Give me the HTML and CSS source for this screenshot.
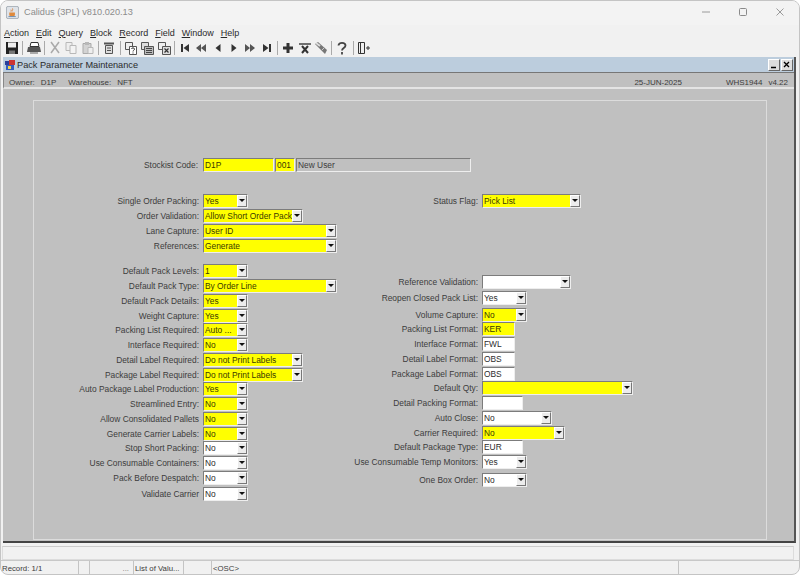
FILE: index.html
```html
<!DOCTYPE html>
<html lang="en">
<head>
    <meta charset="UTF-8">
    <title>Calidus (3PL) v810.020.13</title>
    <link rel="stylesheet" href="styles.css">
</head>
<body>
    <div class="app">
        <header class="titlebar">
            <svg class="app-icon" width="13" height="13" viewBox="0 0 16 16">
                <rect x="0.5" y="0.5" width="15" height="15" rx="2" fill="#dfe3e8" stroke="#9aa3ad"/>
                <path d="M8 3c1 1.500-1 2 0 3.500M6 4.500c0 1 1 1.500 0 2.500" fill="none" stroke="#d9762b"/>
                <path d="M4 8h7v3c0 1-1 1.500-3.500 1.500S4 12 4 11z" fill="#e08a3c"/>
                <path d="M3 13h9" stroke="#5a7fa8"/>
            </svg>
            <span class="app-name">Calidus (3PL) v810.020.13</span>
            <div class="win-btns">
                <svg width="8" height="8" viewBox="0 0 8 8"><path d="M0 4h8" stroke="#9a9a9a"/></svg>
                <svg width="8" height="8" viewBox="0 0 8 8"><rect x="0.500" y="0.500" width="7" height="7" rx="1" fill="none" stroke="#8a8a8a"/></svg>
                <svg width="8" height="8" viewBox="0 0 8 8"><path d="M0.500 0.500l7 7M7.500 0.500l-7 7" stroke="#9a9a9a"/></svg>
            </div>
        </header>

        <nav class="menubar">
            <span><u>A</u>ction</span>
            <span><u>E</u>dit</span>
            <span><u>Q</u>uery</span>
            <span><u>B</u>lock</span>
            <span><u>R</u>ecord</span>
            <span><u>F</u>ield</span>
            <span><u>W</u>indow</span>
            <span><u>H</u>elp</span>
        </nav>

        <div class="toolbar">
            <svg class="tool" viewBox="0 0 14 14"><path d="M1 1h12v12H1z" fill="#222"/><path d="M3 1.500h8v5H3z" fill="#eee"/><path d="M4 9.500h6v3.500H4z" fill="#777"/></svg>
            <i class="sep"></i>
            <svg class="tool" viewBox="0 0 14 14"><path d="M4 1.500h7l1 4H3z" fill="#fff" stroke="#333"/><path d="M1 6h12l1 5H0z" fill="#555"/><path d="M3 11h8v2H3z" fill="#aaa"/></svg>
            <i class="sep"></i>
            <svg class="tool dim" viewBox="0 0 14 14"><path d="M3 1l8 11M11 1L3 12" stroke="#999" stroke-width="1.500" fill="none"/></svg>
            <svg class="tool dim" viewBox="0 0 14 14"><path d="M2 1.500h6v8H2z" fill="#eee" stroke="#aaa"/><path d="M6 4.500h6v8H6z" fill="#f4f4f4" stroke="#aaa"/></svg>
            <svg class="tool dim" viewBox="0 0 14 14"><path d="M2 2.500h8v10H2z" fill="#ccc" stroke="#999"/><path d="M4 1h4v3H4z" fill="#aaa"/><path d="M7 6.500h5v6H7z" fill="#eee" stroke="#aaa"/></svg>
            <i class="sep"></i>
            <svg class="tool" viewBox="0 0 14 14"><path d="M2 1.500h10v2H2z" fill="#555"/><path d="M3.500 4.500h7v8h-7z" fill="#ddd" stroke="#555"/><path d="M5 7h4M5 9.500h4" stroke="#555"/></svg>
            <i class="sep"></i>
            <svg class="tool" viewBox="0 0 14 14"><path d="M1.500 1.500h7v7h-7z" fill="#eee" stroke="#555"/><path d="M5.500 5.500h7v8h-7z" fill="#fff" stroke="#555"/><path d="M7.500 8c0-1.500 3-1.500 3 0s-1.500 1-1.500 2.500M9 11.500v1" fill="none" stroke="#333"/></svg>
            <svg class="tool" viewBox="0 0 14 14"><path d="M1.500 1.500h7v7h-7z" fill="#ddd" stroke="#555"/><path d="M4.500 5.500h9v8h-9z" fill="#bbb" stroke="#555"/><path d="M6 7.500h6M6 9.500h6M6 11.500h6" stroke="#444"/></svg>
            <svg class="tool" viewBox="0 0 14 14"><path d="M1.500 1.500h7v7h-7z" fill="#eee" stroke="#555"/><path d="M5.500 5.500h8v8h-8z" fill="#ddd" stroke="#555"/><path d="M7.500 7.500l4 4M11.500 7.500l-4 4" stroke="#333" stroke-width="1.200"/></svg>
            <i class="sep"></i>
            <svg class="tool" viewBox="0 0 14 14"><path d="M3 3h2v8H3zM11 3v8L5.500 7z" fill="#333"/></svg>
            <svg class="tool" viewBox="0 0 14 14"><path d="M7 3v8L2 7zM12 3v8L7 7z" fill="#555"/></svg>
            <svg class="tool" viewBox="0 0 14 14"><path d="M9.500 3v8L4.500 7z" fill="#333"/></svg>
            <svg class="tool" viewBox="0 0 14 14"><path d="M4.500 3v8l5-4z" fill="#333"/></svg>
            <svg class="tool" viewBox="0 0 14 14"><path d="M2 3v8l5-4zM7 3v8l5-4z" fill="#555"/></svg>
            <svg class="tool" viewBox="0 0 14 14"><path d="M3 3v8l5.500-4zM9 3h2v8H9z" fill="#333"/></svg>
            <i class="sep"></i>
            <svg class="tool" viewBox="0 0 14 14"><path d="M5.500 2h3v3.500H12v3H8.500V12h-3V8.500H2v-3h3.500z" fill="#333"/></svg>
            <svg class="tool" viewBox="0 0 14 14"><path d="M1 3h12" stroke="#444" stroke-width="1.500"/><path d="M4 5l6 7M10 5l-6 7" stroke="#333" stroke-width="2"/></svg>
            <svg class="tool" viewBox="0 0 14 14"><path d="M1 3l3-2 9 8-2 4z" fill="#777"/><path d="M2 2l4 3" stroke="#ddd" stroke-width="2"/><path d="M8 9l3-3" stroke="#ccc"/></svg>
            <i class="sep"></i>
            <svg class="tool" viewBox="0 0 14 14"><path d="M3.500 4.500C3.500 1 10.500 1 10.500 4.500c0 2.500-3.500 2.500-3.500 5M7 11v2.500" fill="none" stroke="#444" stroke-width="1.800"/></svg>
            <i class="sep"></i>
            <svg class="tool" viewBox="0 0 14 14"><path d="M1.500 1.500h6v11h-6z" fill="#eee" stroke="#333"/><path d="M3.500 2v10" stroke="#333"/><path d="M9 7h4M11 5v4" stroke="#333"/></svg>
        </div>

        <main class="mdi">
            <div class="form-title">
                <svg class="form-icon" width="12" height="12" viewBox="0 0 12 12">
                    <path d="M1 2h4v4H1z" fill="#2a3f9a"/><path d="M5 1h6v5H5z" fill="#c33"/><path d="M2 6h8v5H2z" fill="#345cc0"/><path d="M4 7h3v3H4z" fill="#f3d24a"/>
                </svg>
                <span class="form-name">Pack Parameter Maintenance</span>
                <span class="form-btn"><svg width="8" height="8" viewBox="0 0 8 8"><path d="M1 6.500h5" stroke="#000" stroke-width="1.500"/></svg></span>
                <span class="form-btn"><svg width="8" height="8" viewBox="0 0 8 8"><path d="M1 1l5 5M6 1L1 6" stroke="#000" stroke-width="1.300"/></svg></span>
            </div>

            <div class="info-strip">
                <span class="owner">Owner:</span><span class="owner-val">D1P</span>
                <span class="wh">Warehouse:</span><span>NFT</span>
                <span class="date">25-JUN-2025</span>
                <span class="screen">WHS1944</span><span class="ver">v4.22</span>
            </div>

            <section class="panel">
                <div class="stockist">
                    <span class="lbl">Stockist Code:</span>
                    <div class="field req w71"><span>D1P</span></div>
                    <div class="field req w20"><span>001</span></div>
                    <div class="field grey w175"><span>New User</span></div>
                </div>

                <div class="columns">
                    <div class="col col-left">
                        <div class="row"><span class="lbl">Single Order Packing:</span><div class="field req w45"><span>Yes</span><i class="drop"></i></div></div>
                        <div class="row"><span class="lbl">Order Validation:</span><div class="field req w100"><span>Allow Short Order Pack</span><i class="drop"></i></div></div>
                        <div class="row"><span class="lbl">Lane Capture:</span><div class="field req w134"><span>User ID</span><i class="drop"></i></div></div>
                        <div class="row"><span class="lbl">References:</span><div class="field req w134"><span>Generate</span><i class="drop"></i></div></div>
                        <div class="row group"><span class="lbl">Default Pack Levels:</span><div class="field req w45"><span>1</span><i class="drop"></i></div></div>
                        <div class="row"><span class="lbl">Default Pack Type:</span><div class="field req w134"><span>By Order Line</span><i class="drop"></i></div></div>
                        <div class="row"><span class="lbl">Default Pack Details:</span><div class="field req w45"><span>Yes</span><i class="drop"></i></div></div>
                        <div class="row"><span class="lbl">Weight Capture:</span><div class="field req w45"><span>Yes</span><i class="drop"></i></div></div>
                        <div class="row"><span class="lbl">Packing List Required:</span><div class="field req w45"><span>Auto ...</span><i class="drop"></i></div></div>
                        <div class="row"><span class="lbl">Interface Required:</span><div class="field req w45"><span>No</span><i class="drop"></i></div></div>
                        <div class="row"><span class="lbl">Detail Label Required:</span><div class="field req w100"><span>Do not Print Labels</span><i class="drop"></i></div></div>
                        <div class="row"><span class="lbl">Package Label Required:</span><div class="field req w100"><span>Do not Print Labels</span><i class="drop"></i></div></div>
                        <div class="row"><span class="lbl">Auto Package Label Production:</span><div class="field req w45"><span>Yes</span><i class="drop"></i></div></div>
                        <div class="row"><span class="lbl">Streamlined Entry:</span><div class="field req w45"><span>No</span><i class="drop"></i></div></div>
                        <div class="row"><span class="lbl">Allow Consolidated Pallets</span><div class="field req w45"><span>No</span><i class="drop"></i></div></div>
                        <div class="row"><span class="lbl">Generate Carrier Labels:</span><div class="field req w45"><span>No</span><i class="drop"></i></div></div>
                        <div class="row"><span class="lbl">Stop Short Packing:</span><div class="field w45"><span>No</span><i class="drop"></i></div></div>
                        <div class="row"><span class="lbl">Use Consumable Containers:</span><div class="field w45"><span>No</span><i class="drop"></i></div></div>
                        <div class="row"><span class="lbl">Pack Before Despatch:</span><div class="field w45"><span>No</span><i class="drop"></i></div></div>
                        <div class="row bump"><span class="lbl">Validate Carrier</span><div class="field w45"><span>No</span><i class="drop"></i></div></div>
                    </div>

                    <div class="col col-right">
                        <div class="row"><span class="lbl">Status Flag:</span><div class="field req w99"><span>Pick List</span><i class="drop"></i></div></div>
                        <div class="row after-status"><span class="lbl">Reference Validation:</span><div class="field w89"><span></span><i class="drop"></i></div></div>
                        <div class="row bump"><span class="lbl">Reopen Closed Pack List:</span><div class="field w45"><span>Yes</span><i class="drop"></i></div></div>
                        <div class="row bump"><span class="lbl">Volume Capture:</span><div class="field req w45"><span>No</span><i class="drop"></i></div></div>
                        <div class="row"><span class="lbl">Packing List Format:</span><div class="field req w33"><span>KER</span></div></div>
                        <div class="row"><span class="lbl">Interface Format:</span><div class="field w33"><span>FWL</span></div></div>
                        <div class="row"><span class="lbl">Detail Label Format:</span><div class="field w33"><span>OBS</span></div></div>
                        <div class="row"><span class="lbl">Package Label Format:</span><div class="field w33"><span>OBS</span></div></div>
                        <div class="row"><span class="lbl">Default Qty:</span><div class="field req w151"><span></span><i class="drop"></i></div></div>
                        <div class="row"><span class="lbl">Detail Packing Format:</span><div class="field w41"><span></span></div></div>
                        <div class="row"><span class="lbl">Auto Close:</span><div class="field w70"><span>No</span><i class="drop"></i></div></div>
                        <div class="row"><span class="lbl">Carrier Required:</span><div class="field req w83"><span>No</span><i class="drop"></i></div></div>
                        <div class="row"><span class="lbl">Default Package Type:</span><div class="field w41"><span>EUR</span></div></div>
                        <div class="row"><span class="lbl">Use Consumable Temp Monitors:</span><div class="field w45"><span>Yes</span><i class="drop"></i></div></div>
                        <div class="row last-right"><span class="lbl">One Box Order:</span><div class="field w45"><span>No</span><i class="drop"></i></div></div>
                    </div>
                </div>
            </section>
        </main>

        <div class="message-line"></div>
        <footer class="statusbar">
            <span class="cell c-record">Record: 1/1</span>
            <span class="cell c-a"></span>
            <span class="cell c-b">...</span>
            <span class="cell c-lov">List of Valu...</span>
            <span class="cell c-c"></span>
            <span class="cell c-osc">&lt;OSC&gt;</span>
            <span class="cell c-end"></span>
        </footer>
    </div>
</body>
</html>
```

FILE: styles.css
```css
:root {
    --chrome: #f1f1f1;
    --form-grey: #c0c0c0;
    --title-blue: #bccddd;
    --required: #ffff00;
    --text: #3c3c3c;
}
html, body {
    margin: 0;
    padding: 0;
    background: #fff;
}
body {
    font-family: 'Liberation Sans', Arial, sans-serif;
    font-size: 8.400px;
    color: var(--text);
    overflow: hidden;
}
.app {
    width: 800px;
    height: 575px;
    box-sizing: border-box;
    display: flex;
    flex-direction: column;
    background: var(--chrome);
    border: 1px solid #c4c4c4;
    border-radius: 8px;
    overflow: hidden;
}

/* window title */
.titlebar {
    height: 24px;
    box-sizing: border-box;
    display: flex;
    align-items: center;
    padding: 0 0 2px 5px;
    background: #f3f3f3;
}
.app-icon {
    margin-right: 5px;
}
.app-name {
    font-size: 9.200px;
    color: #8c8c8c;
}
.win-btns {
    margin-left: auto;
    display: flex;
    gap: 29px;
    padding-right: 15px;
}

.menubar {
    height: 15px;
    display: flex;
    align-items: center;
    gap: 7px;
    padding-left: 3px;
    font-size: 9px;
    color: #2a2a2a;
}

.toolbar {
    height: 16px;
    display: flex;
    align-items: center;
    padding-left: 4px;
    gap: 2.300px;
}
.tool {
    width: 14px;
    height: 14px;
    flex: none;
}
.tool.dim {
    opacity: .8;
}
.sep {
    width: 1px;
    height: 14px;
    background: #aaa;
    margin: 0 1px;
    flex: none;
}

/* forms area */
.mdi {
    flex: 1;
    margin: 1px 3px 0 2px;
    background: var(--form-grey);
    border-right: 2px solid #555;
    border-bottom: 2px solid #444;
    display: flex;
    flex-direction: column;
    min-height: 0;
}
.form-title {
    height: 15px;
    flex: none;
    display: flex;
    align-items: center;
    background: var(--title-blue);
    border-bottom: 1px solid #777;
    padding: 0 1px;
    gap: 1px;
    font-size: 9.200px;
}
.form-name {
    margin-right: auto;
    color: #2a2a2a;
}
.form-btn {
    width: 10px;
    height: 10px;
    background: #ddd;
    border: 1px solid;
    border-color: #fff #666 #666 #fff;
    display: flex;
    align-items: center;
    justify-content: center;
}
.info-strip {
    height: 9px;
    padding: 5px 0 0 5px;
    flex: none;
    display: flex;
    align-items: center;
    border-left: 1px solid #888;
    border-bottom: 2px solid #e4e4e4;
    font-size: 8px;
}
.owner {
    margin-right: 6px;
}
.owner-val {
    margin-right: 12px;
}
.wh {
    margin-right: 6px;
}
.date {
    margin-left: auto;
    margin-right: 44px;
}
.ver {
    margin-left: 6px;
    margin-right: 6px;
}

.panel {
    margin: 11px 27px 0 30px;
    height: 440px;
    flex: none;
    box-sizing: border-box;
    border: 1px solid #dcdcdc;
    padding-top: 56px;
}
.lbl {
    text-align: right;
    flex: none;
    white-space: nowrap;
    padding-right: 4px;
    box-sizing: border-box;
}
.stockist {
    display: flex;
    height: 15px;
    align-items: center;
    gap: 1px;
}
.stockist .lbl {
    width: 168px;
}
.columns {
    display: flex;
    margin-top: 22px;
}
.col-left {
    width: 316px;
}
.col-left .lbl {
    width: 169px;
}
.col-right .lbl {
    width: 132px;
}
.row {
    display: flex;
    align-items: center;
    height: 14.750px;
}
.row.group {
    margin-top: 11px;
}
.row.after-status {
    margin-top: 66px;
}
.row.bump {
    margin-top: 1.500px;
}
.row.last-right {
    margin-top: 3px;
}

.field {
    height: 14px;
    box-sizing: border-box;
    display: flex;
    align-items: center;
    flex: none;
    background: #fff;
    border: 1px solid;
    border-color: #7c7c7c #eee #eee #7c7c7c;
    padding-left: 1px;
    overflow: hidden;
    white-space: nowrap;
    color: #2c2c2c;
}
.field span {
    flex: 1;
    overflow: hidden;
}
.field.req {
    background: var(--required);
    color: #3a3a00;
}
.field.grey {
    background: var(--form-grey);
    color: #3c3c3c;
}
.drop {
    width: 10px;
    height: 12px;
    flex: none;
    box-sizing: border-box;
    background: #ececec;
    border: 1px solid;
    border-color: #fff #777 #777 #fff;
    position: relative;
}
.drop::after {
    content: '';
    position: absolute;
    left: 1px;
    top: 3px;
    border-left: 3px solid transparent;
    border-right: 3px solid transparent;
    border-top: 3px solid #111;
}
.w20 { width: 20px; }
.w33 { width: 33px; }
.w41 { width: 41px; }
.w45 { width: 45px; }
.w70 { width: 70px; }
.w71 { width: 71px; }
.w83 { width: 83px; }
.w89 { width: 89px; }
.w99 { width: 99px; }
.w100 { width: 100px; }
.w134 { width: 134px; }
.w151 { width: 151px; }
.w175 { width: 175px; }

/* bottom bars */
.message-line {
    height: 12px;
    flex: none;
    margin: 3px 5px 0 1px;
    border: 1px solid #dcdcdc;
    border-top-color: #ccc;
}
.statusbar {
    height: 13px;
    flex: none;
    display: flex;
    border-top: 1px solid #c8c8c8;
    font-size: 7.800px;
}
.cell {
    box-sizing: border-box;
    border-right: 1px solid #c4c4c4;
    padding-left: 1px;
    white-space: nowrap;
    line-height: 15px;
}
.c-record { width: 78px; }
.c-a { width: 11px; }
.c-b { width: 44px; text-align: right; color: #777; padding-right: 4px; }
.c-lov { width: 50px; }
.c-c { width: 28px; }
.c-osc { width: 467px; }
.c-end { flex: 1; border-right: none; }
```
